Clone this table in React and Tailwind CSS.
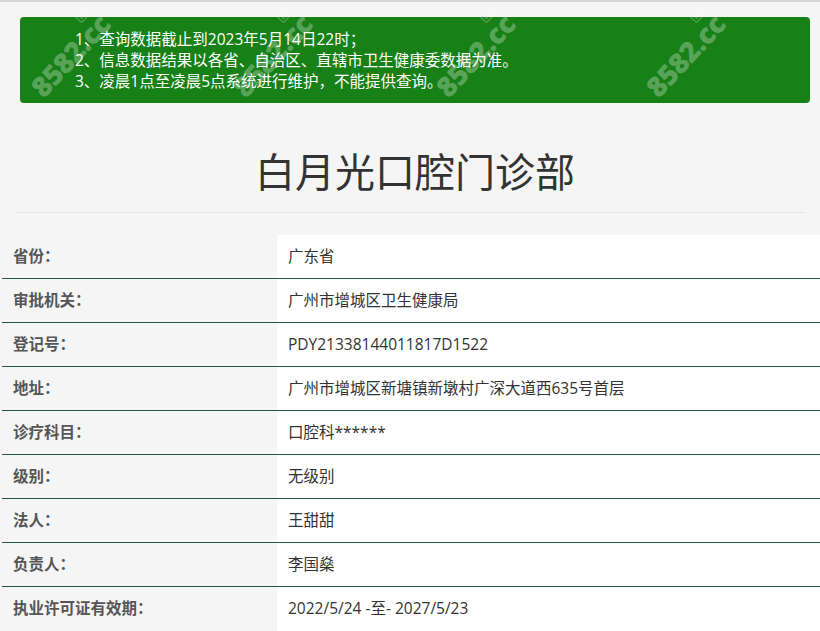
import React from "react";

const rows = [
  ["省份：", "广东省"],
  ["审批机关：", "广州市增城区卫生健康局"],
  ["登记号：", "PDY21338144011817D1522"],
  ["地址：", "广州市增城区新塘镇新墩村广深大道西635号首层"],
  ["诊疗科目：", "口腔科******"],
  ["级别：", "无级别"],
  ["法人：", "王甜甜"],
  ["负责人：", "李国燊"],
  ["执业许可证有效期：", "2022/5/24 -至- 2027/5/23"],
];

const marks = [30, 232, 435, 645];

function Watermark({ left }) {
  return (
    <div
      className="absolute top-[22px] w-[104px] h-[32px] -rotate-[47deg] pointer-events-none select-none flex items-center justify-center"
      style={{ left: left - 32 }}
    >
      <span className="relative text-[28px] leading-[32px] font-extrabold text-white/30 tracking-[-0.5px]">
        8582.cc
        <span className="absolute right-[2px] top-[-7px] text-[7px] leading-[8px] font-bold text-white/30 border border-white/30 rounded-[2px] px-[1px]">
          口腔
        </span>
      </span>
    </div>
  );
}

export default function App() {
  return (
    <div className="min-h-screen w-full bg-[#f5f5f5] border-t-2 border-[#d6d6d6] overflow-hidden font-['Open_Sans','Noto_Sans_CJK_SC',sans-serif]">
      <div className="pl-[20px] pr-[10px] pt-[15px]">
        <div className="relative h-[86px] rounded-[4px] bg-[#178017] text-white text-[15.5px] leading-[21px] pl-[55px] pt-[12px]">
          <p>1、查询数据截止到2023年5月14日22时；</p>
          <p>2、信息数据结果以各省、自治区、直辖市卫生健康委数据为准。</p>
          <p>3、凌晨1点至凌晨5点系统进行维护，不能提供查询。</p>
          {marks.map((m) => (
            <Watermark key={m} left={m} />
          ))}
        </div>
      </div>

      <h1 className="mt-[47px] h-[44px] leading-[44px] text-center pl-[10px] text-[40px] text-[#333333] font-normal">
        白月光口腔门诊部
      </h1>
      <div className="mx-[15px] mt-[18px] h-px bg-[#e6e6e6]" />

      <div className="mt-[22px] ml-[2px]">
        {rows.map(([k, v], i) => (
          <div
            key={k}
            className={`flex h-[44px] ${i < rows.length - 1 ? "border-b border-[#235a3e]" : ""}`}
          >
            <div className="w-[275px] shrink-0 pl-[11px] flex items-center text-[15.5px] font-bold text-[#555555]">
              {k}
            </div>
            <div className="flex-1 bg-white pl-[11px] flex items-center text-[15.5px] text-[#333333]">
              {v}
            </div>
          </div>
        ))}
      </div>
    </div>
  );
}
